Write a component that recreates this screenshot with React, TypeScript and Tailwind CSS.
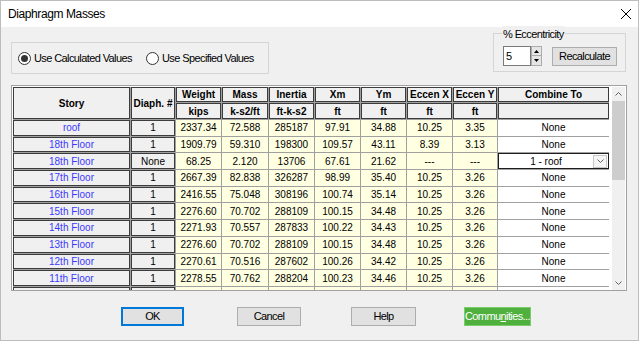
import React from "react";

type Row = [string, string, string, string, string, string, string, string, string, string];

const rows: Row[] = [
  ["roof", "1", "2337.34", "72.588", "285187", "97.91", "34.88", "10.25", "3.35", "None"],
  ["18th Floor", "1", "1909.79", "59.310", "198300", "109.57", "43.11", "8.39", "3.13", "None"],
  ["18th Floor", "None", "68.25", "2.120", "13706", "67.61", "21.62", "---", "---", "1 - roof"],
  ["17th Floor", "1", "2667.39", "82.838", "326287", "98.99", "35.40", "10.25", "3.26", "None"],
  ["16th Floor", "1", "2416.55", "75.048", "308196", "100.74", "35.14", "10.25", "3.26", "None"],
  ["15th Floor", "1", "2276.60", "70.702", "288109", "100.15", "34.48", "10.25", "3.26", "None"],
  ["14th Floor", "1", "2271.93", "70.557", "287833", "100.22", "34.43", "10.25", "3.26", "None"],
  ["13th Floor", "1", "2276.60", "70.702", "288109", "100.15", "34.48", "10.25", "3.26", "None"],
  ["12th Floor", "1", "2270.61", "70.516", "287602", "100.26", "34.42", "10.25", "3.26", "None"],
  ["11th Floor", "1", "2278.55", "70.762", "288204", "100.23", "34.46", "10.25", "3.26", "None"],
  // next row only peeks in under the frame edge
  ["", "", "", "", "", "", "", "", "", ""],
];

const head = "flex items-center justify-center bg-[#f0f0f0] border border-[#3c3c3c] font-bold text-black";
const rowHead = "flex items-center justify-center bg-[#f0f0f0] border border-[#3c3c3c]";
const data = "flex items-center justify-center bg-[#ffffe1] text-black";

const Radio = ({ checked, label, width }: { checked?: boolean; label: string; width: string }) => (
  <div className={`flex items-center ${width}`}>
    <div className="w-[13px] h-[13px] rounded-full border border-[#333] bg-white flex items-center justify-center">
      {checked && <div className="w-[7px] h-[7px] rounded-full bg-[#333]" />}
    </div>
    <span className="ml-[3px] tracking-[-0.6px]">{label}</span>
  </div>
);

const Chevron = ({ up }: { up?: boolean }) => (
  <svg width="7" height="4" viewBox="0 0 7 4">
    <path d={up ? "M0.5 3.5 L3.5 0.5 L6.5 3.5" : "M0.5 0.5 L3.5 3.5 L6.5 0.5"} fill="none" stroke="#606060" strokeWidth="1" />
  </svg>
);

export default function App() {
  return (
    <div className="w-[639px] h-[341px] bg-[#f0f0f0] text-[11px] text-black overflow-hidden outline outline-1 outline-[#bdbdbd] -outline-offset-1 font-[family-name:Liberation_Sans,Arial,sans-serif]">
      {/* title bar */}
      <div className="h-[27px] bg-white flex items-center pl-[8px] pr-[8px]">
        <span className="text-[12px] tracking-[-0.4px]">Diaphragm Masses</span>
        <svg className="ml-auto" width="10" height="10" viewBox="0 0 10 10">
          <path d="M0 0 L10 10 M10 0 L0 10" stroke="#000" strokeWidth="1" />
        </svg>
      </div>

      {/* top options */}
      <div className="h-[58px] flex items-start">
        <div className="ml-[11px] mt-[15px] w-[258px] h-[32px] border border-[#d5d5d5] flex items-center pl-[6px]">
          <Radio checked label="Use Calculated Values" width="w-[128px]" />
          <Radio label="Use Specified Values" width="w-[120px]" />
        </div>
        <div className="relative ml-auto mr-[13px] mt-[6px] w-[133px] h-[39px] border border-[#d5d5d5] pl-[9px] pt-[12px] flex items-start">
          <span className="absolute left-[8px] top-[-8px] bg-[#f0f0f0] px-px tracking-[-0.6px]">% Eccentricity</span>
          <div className="w-[28px] h-[20px] border border-[#7a7a7a] bg-white flex items-center pl-[2px]">5</div>
          <div className="w-[11px] h-[20px] flex flex-col">
            <div className="h-[10px] bg-[#e5e5e5] border border-[#acacac] flex items-center justify-center">
              <svg width="5" height="3" viewBox="0 0 5 3"><path d="M0 3 L2.5 0 L5 3 Z" fill="#000" /></svg>
            </div>
            <div className="h-[10px] bg-[#e5e5e5] border border-t-0 border-[#acacac] flex items-center justify-center">
              <svg width="5" height="3" viewBox="0 0 5 3"><path d="M0 0 L2.5 3 L5 0 Z" fill="#000" /></svg>
            </div>
          </div>
          <div className="ml-[10px] mt-px w-[65px] h-[19px] bg-[#e1e1e1] border border-[#adadad] flex items-center justify-center tracking-[-0.6px]">
            Recalculate
          </div>
        </div>
      </div>

      {/* grid */}
      <div className="ml-[11px] w-[616px] h-[206px] border border-[#a0a0a0] bg-white pt-px pl-px flex overflow-hidden">
        <div className="self-start grid grid-cols-[117px_44px_45px_46px_45px_45px_45px_45px_44px_111px] grid-rows-[15px_16px] auto-rows-[15.7px] gap-px bg-[#a0a0a0] text-[10px]">
          <div className={`${head} row-span-2`}>Story</div>
          <div className={`${head} row-span-2`}>Diaph. #</div>
          <div className={head}>Weight</div>
          <div className={head}>Mass</div>
          <div className={head}>Inertia</div>
          <div className={head}>Xm</div>
          <div className={head}>Ym</div>
          <div className={head}>Eccen X</div>
          <div className={head}>Eccen Y</div>
          <div className={head}>Combine To</div>
          <div className={head}>kips</div>
          <div className={head}>k-s2/ft</div>
          <div className={head}>ft-k-s2</div>
          <div className={head}>ft</div>
          <div className={head}>ft</div>
          <div className={head}>ft</div>
          <div className={head}>ft</div>
          <div className={head}></div>
          {rows.map((r, i) => (
            <React.Fragment key={i}>
              <div className={`${rowHead} text-[#3a3aff]`}>{r[0]}</div>
              <div className={rowHead}>{r[1]}</div>
              {r.slice(2, 9).map((v, j) => (
                <div key={j} className={data}>{v}</div>
              ))}
              {i === 2 ? (
                <div className="relative bg-white border border-[#1e1e1e] flex items-center">
                  <span className="flex-1 text-center">{r[9]}</span>
                  <div className="w-[14px] h-[13px] mr-px bg-[#f5f5f5] border border-[#c8c8c8] flex items-center justify-center">
                    <Chevron />
                  </div>
                </div>
              ) : (
                <div className="flex items-center justify-center bg-white">{r[9]}</div>
              )}
            </React.Fragment>
          ))}
        </div>
        {/* scrollbar */}
        <div className="ml-[3px] w-[13px] h-full bg-[#f0f0f0] flex flex-col">
          <div className="h-[14px] flex items-center justify-center">
            <Chevron up />
          </div>
          <div className="h-[79px] bg-[#cdcdcd]" />
          <div className="flex-1" />
          <div className="h-[14px] flex items-center justify-center">
            <Chevron />
          </div>
        </div>
      </div>

      {/* buttons */}
      <div className="mt-[16px] flex pl-[121px] tracking-[-0.6px]">
        <div className="w-[63px] h-[19px] bg-[#e1e1e1] border border-[#0078d7] shadow-[inset_0_0_0_1px_#0078d7] flex items-center justify-center">OK</div>
        <div className="ml-[53px] w-[64px] h-[19px] bg-[#e1e1e1] border border-[#adadad] flex items-center justify-center">Cancel</div>
        <div className="ml-[50px] w-[65px] h-[19px] bg-[#e1e1e1] border border-[#adadad] flex items-center justify-center">Help</div>
        <div className="ml-[48px] w-[67px] h-[19px] bg-[#4fb03e] border border-[#7ccc6c] text-white flex items-center justify-center">
          Commu<span className="underline">n</span>ities...
        </div>
      </div>
    </div>
  );
}
